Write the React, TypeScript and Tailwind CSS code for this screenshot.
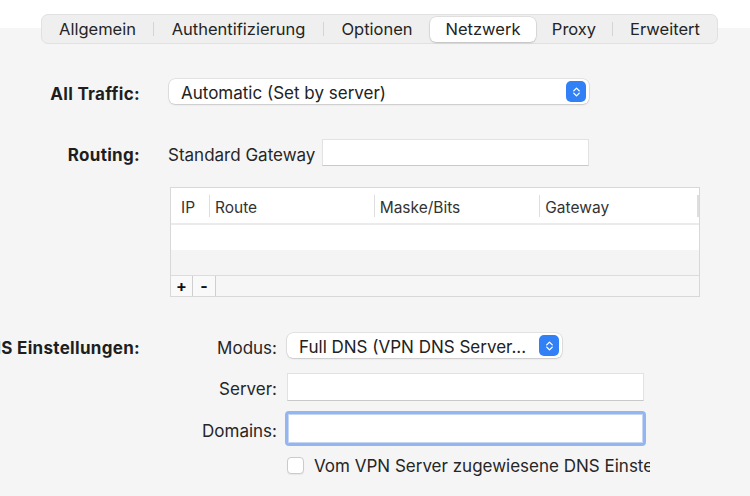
import { ChevronDown, ChevronUp } from "lucide-react";

const FONT = { fontFamily: "Inter, 'Noto Sans', sans-serif" };

type Seg = { label: string; w: string; selected?: boolean; sepAfter?: boolean };

const SEGMENTS: Seg[] = [
  { label: "Allgemein", w: "w-[111px]", sepAfter: true },
  { label: "Authentifizierung", w: "w-[169px]", sepAfter: true },
  { label: "Optionen", w: "w-[106px]" },
  { label: "Netzwerk", w: "w-[106px]", selected: true },
  { label: "Proxy", w: "w-[76px]", sepAfter: true },
  { label: "Erweitert", w: "w-[104px]" },
];

function Stepper() {
  return (
    <div className="flex h-[21px] w-[20px] flex-col items-center justify-center rounded-[5px] bg-[#3180f6] text-white">
      <ChevronUp className="-mb-[3px] size-[11px]" strokeWidth={3} />
      <ChevronDown className="-mt-[3px] size-[11px]" strokeWidth={3} />
    </div>
  );
}

function Popup({ text, width }: { text: string; width: string }) {
  return (
    <div
      className={`flex h-[25px] ${width} items-center justify-between rounded-[6px] bg-white pl-[12px] pr-[3px] text-[17px] text-[#222] shadow-[0_0_0_0.5px_rgba(0,0,0,0.14),0_1px_2px_rgba(0,0,0,0.12)]`}
    >
      <span className="h-[25px] whitespace-nowrap pt-[4px] leading-[20px]">{text}</span>
      <Stepper />
    </div>
  );
}

function Field({ width, height = "h-[28px]" }: { width: string; height?: string }) {
  return <div className={`${width} ${height} border border-[#e2e2e2] border-b-[#c9c9c9] bg-white`} />;
}

function Label({ children }: { children: React.ReactNode }) {
  return (
    <div className="flex h-[25px] w-[140px] shrink-0 justify-end whitespace-nowrap pt-[5px] text-[17px] font-bold leading-[20px] tracking-[0.3px] text-[#1e1e1e]">
      <span>{children}</span>
    </div>
  );
}

function SubLabel({ children }: { children: React.ReactNode }) {
  return (
    <div className="flex h-[28px] w-[277px] shrink-0 justify-end whitespace-nowrap pt-[6px] text-[17px] leading-[20px] text-[#262626]">
      {children}
    </div>
  );
}

function RouteTable() {
  const cols = [
    { label: "IP", w: "w-[38px]" },
    { label: "Route", w: "w-[165px]" },
    { label: "Maske/Bits", w: "w-[166px]" },
    { label: "Gateway", w: "w-[158px]" },
  ];
  return (
    <div className="ml-[170px] w-[530px] border border-[#d8d8d8] bg-white">
      <div className="flex h-[37px] items-center border-b-2 border-[#ebebeb] text-[15.5px] text-[#333]">
        {cols.map((c, i) => (
          <div
            key={c.label}
            className={`flex h-[22px] ${c.w} items-center whitespace-nowrap pt-[4px] ${
              i > 0 ? "border-l border-[#dedede] pl-[5px]" : "pl-[10px]"
            }`}
          >
            {c.label}
          </div>
        ))}
        <div className="h-[22px] border-l-2 border-[#dedede]" />
      </div>
      <div className="h-[25px] bg-white" />
      <div className="h-[25px] bg-[#f4f4f4]" />
      <div className="flex h-[21px] border-t border-[#dcdcdc] bg-[#f6f6f6]">
        <div className="flex w-[22px] items-center justify-center border-r border-[#cfcfcf] bg-[#f9f9f9] text-[16px] font-bold leading-none text-[#111]">
          +
        </div>
        <div className="flex w-[23px] items-center justify-center border-r border-[#cfcfcf] bg-[#f9f9f9] text-[16px] font-bold leading-none text-[#111]">
          -
        </div>
      </div>
    </div>
  );
}

export default function App() {
  return (
    <div
      className="h-[496px] w-[750px] overflow-hidden bg-[linear-gradient(to_bottom,#ffffff_28px,#f5f5f5_28px)]"
      style={FONT}
    >
      {/* segmented tab bar */}
      <div className="pt-[14px]">
        <div className="ml-[41px] flex h-[30px] w-[677px] items-center rounded-[7px] border border-[#e1e1e1] bg-[#efefef]">
          {SEGMENTS.map((s) => (
            <div key={s.label} className="flex items-center">
              <div
                className={`flex h-[25px] ${s.w} items-center justify-center whitespace-nowrap text-[16.5px] text-[#242424] ${
                  s.selected ? "rounded-[6px] bg-white shadow-[0_0_0_0.5px_rgba(0,0,0,0.12),0_1px_2px_rgba(0,0,0,0.15)]" : ""
                }`}
              >
                {s.label}
              </div>
              {s.sepAfter && <div className="h-[14px] w-px bg-[#d4d4d4]" />}
            </div>
          ))}
        </div>
      </div>

      {/* All Traffic */}
      <div className="mt-[35px] flex items-center gap-[29px]">
        <Label>All Traffic:</Label>
        <Popup text="Automatic (Set by server)" width="w-[420px]" />
      </div>

      {/* Routing */}
      <div className="mt-[35px] flex items-center">
        <Label>Routing:</Label>
        <span className="ml-[28px] h-[25px] w-[154px] overflow-hidden whitespace-nowrap pt-[5px] text-[17px] leading-[20px] text-[#262626]">
          Standard Gateway
        </span>
        <Field width="w-[267px]" height="h-[27px]" />
      </div>

      <div className="mt-[21px]">
        <RouteTable />
      </div>

      {/* DNS */}
      <div className="mt-[36px] flex items-center">
        <Label>DNS Einstellungen:</Label>
        <div className="flex h-[25px] w-[137px] justify-end pt-[5px] text-[17px] leading-[20px] text-[#262626]">Modus:</div>
        <div className="ml-[10px]">
          <Popup text="Full DNS (VPN DNS Server..." width="w-[275px]" />
        </div>
      </div>

      <div className="mt-[15px] flex items-center">
        <SubLabel>Server:</SubLabel>
        <div className="ml-[10px]">
          <Field width="w-[357px]" />
        </div>
      </div>

      <div className="mt-[10px] flex items-center">
        <SubLabel>Domains:</SubLabel>
        <div className="ml-[8px] rounded-[4px] border-[3px] border-[#93b6f0] bg-white">
          <div className="h-[29px] w-[355px] border border-[#c6d6f2] bg-white" />
        </div>
      </div>

      <div className="mt-[9px] flex items-center">
        <div className="ml-[287px] h-[17px] w-[17px] rounded-[4px] border border-[#cbcbcb] bg-white shadow-[0_1px_1px_rgba(0,0,0,0.06)]" />
        <div className="ml-[10px] h-[21px] w-[336px] overflow-hidden whitespace-nowrap pt-[1px] text-[17px] leading-[20px] text-[#262626]">
          Vom VPN Server zugewiesene DNS Einstellungen
        </div>
      </div>
    </div>
  );
}
